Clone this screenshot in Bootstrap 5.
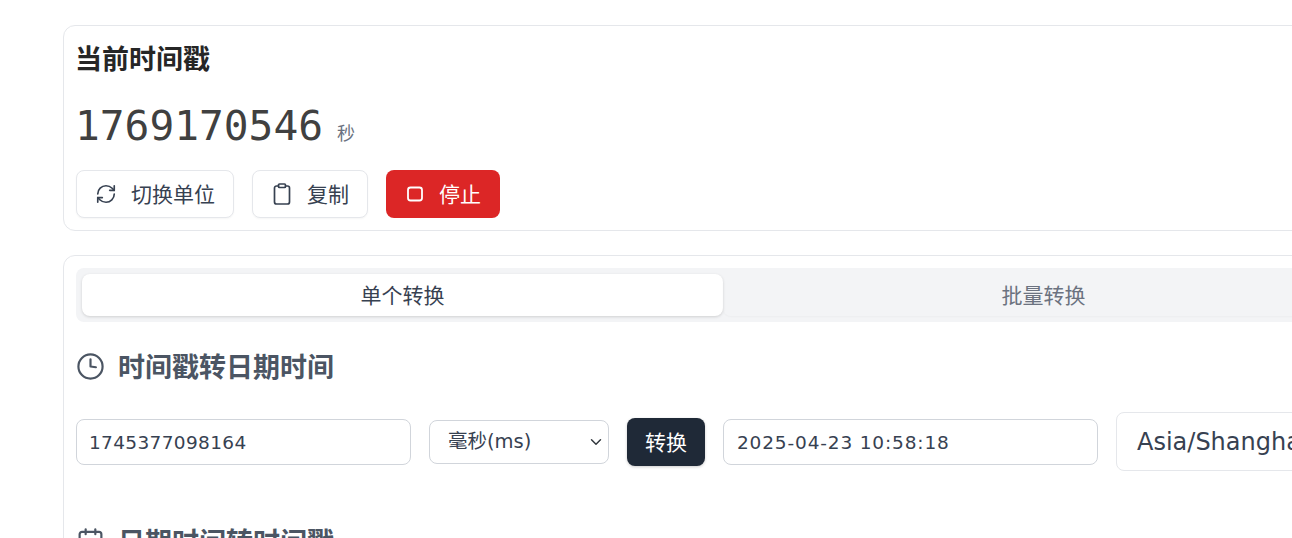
<!DOCTYPE html>
<html lang="zh-CN">
<head>
    <meta charset="UTF-8">
    <meta name="viewport" content="width=device-width, initial-scale=1.0">
    <title>时间戳转换</title>
    <link href="https://cdn.jsdelivr.net/npm/bootstrap@5.3.3/dist/css/bootstrap.min.css" rel="stylesheet">
    <style>
        html, body { overflow: hidden; height: 538px; }
        body { background: #fff; font-family: "DejaVu Sans", "Noto Sans CJK SC", sans-serif; color: #374151; }
        .page-wrap { width: 1320px; margin-left: 63px; padding-top: 25px; }
        .panel { border: 1px solid #e5e7eb; border-radius: 12px; padding: 12px; background: #fff; }
        .panel + .panel { margin-top: 24px; }
        .panel-top { height: 206px; }
        .panel-title { font-size: 27px; font-weight: 700; color: #262626; line-height: 42px; margin: -1px 0 0 -1px; font-family: "Noto Sans CJK SC", sans-serif; }
        .stamp-row { margin-top: 19px; height: 56px; }
        .stamp-num { font-family: "DejaVu Sans Mono", monospace; font-size: 41.2px; line-height: 56px; color: #404040; margin-left: -1px; }
        .stamp-unit { font-size: 18px; color: #6b7280; margin-left: 14px; font-family: "Noto Sans CJK SC", sans-serif; }
        .act-row { gap: 18px; margin-top: 16px; }
        .act-btn { height: 48px; font-size: 21px; border-radius: 8px; padding: 0 18px; gap: 14px; font-family: "Noto Sans CJK SC", sans-serif; }
        .act-light { background: #fff; border: 1px solid #e5e7eb; color: #374151; box-shadow: 0 1px 2px rgba(0,0,0,.04); }
        .act-red { background: #dc2626; border: 0; color: #fff; padding: 0 19px 0 18px; gap: 13px; }
        .act-btn svg { flex-shrink: 0; }
        .tab-strip { background: #f3f4f6; border-radius: 8px; padding: 6px; height: 54px; }
        .tab-strip .nav-link { height: 42px; padding: 0; font-size: 21px; border-radius: 8px; color: #6b7280; box-shadow: 0 1px 2px rgba(0,0,0,.03); font-family: "Noto Sans CJK SC", sans-serif; }
        .tab-strip .nav-link.active { background: #fff; color: #374151; box-shadow: 0 1px 3px rgba(0,0,0,.15); }
        .sec-head { font-size: 27px; font-weight: 700; color: #4b5563; gap: 13px; margin: 0; font-family: "Noto Sans CJK SC", sans-serif; }
        .sec-one { margin-top: 24px; height: 40px; }
        .sec-one svg { margin-top: 1px; }
        .sec-two { margin-top: 50px; height: 40px; }
        .conv-row { gap: 18px; margin-top: 26px; height: 59px; }
        .conv-input { height: 46px; border-color: #d1d5db; border-radius: 8px; padding: 1px 12px 0; color: #374151; font-size: 18.5px; }
        .field-a { width: 335px; letter-spacing: .35px; }
        .field-b { width: 180px; height: 44px; font-size: 19.5px; border-color: #d1d5db; border-radius: 8px; padding: 1px 30px 0 18px; color: #374151; background-position: right 4px center; }
        .field-c { width: 375px; padding-left: 13px; letter-spacing: .85px; }
        .conv-btn { width: 78px; height: 48px; background: #1f2937; color: #fff; border: 0; border-radius: 8px; font-size: 21px; padding: 0; box-shadow: 0 1px 3px rgba(0,0,0,.2); font-family: "Noto Sans CJK SC", sans-serif; }
        .tz-box { width: 230px; height: 59px; font-size: 24px; border: 1px solid #e5e7eb; border-radius: 8px; padding: 0 20px; color: #374151; flex-shrink: 0; }
    </style>
</head>
<body>

    <div class="page-wrap">

        <div class="panel panel-top">
            <h2 class="panel-title">当前时间戳</h2>
            <div class="stamp-row d-flex align-items-baseline">
                <span class="stamp-num">1769170546</span>
                <span class="stamp-unit">秒</span>
            </div>
            <div class="d-flex act-row">
                <button type="button" class="btn act-btn act-light d-inline-flex align-items-center">
                    <svg width="22" height="22" viewBox="0 0 24 24" fill="none" stroke="currentColor" stroke-width="1.8" stroke-linecap="round" stroke-linejoin="round"><path d="M3 12a9 9 0 0 1 9-9 9.75 9.75 0 0 1 6.74 2.74L21 8"/><path d="M21 3v5h-5"/><path d="M21 12a9 9 0 0 1-9 9 9.75 9.75 0 0 1-6.74-2.74L3 16"/><path d="M8 16H3v5"/></svg>
                    切换单位
                </button>
                <button type="button" class="btn act-btn act-light d-inline-flex align-items-center">
                    <svg width="22" height="24" viewBox="0 0 22 24" fill="none" stroke="currentColor" stroke-width="1.7" stroke-linecap="round" stroke-linejoin="round"><rect x="7.5" y="2" width="7" height="3.5" rx="1"/><path d="M14.5 4h2a2 2 0 0 1 2 2v14a2 2 0 0 1-2 2h-11a2 2 0 0 1-2-2V6a2 2 0 0 1 2-2h2"/></svg>
                    复制
                </button>
                <button type="button" class="btn act-btn act-red d-inline-flex align-items-center">
                    <svg width="22" height="22" viewBox="0 0 22 22" fill="none" stroke="currentColor" stroke-width="1.8" stroke-linecap="round" stroke-linejoin="round"><rect x="4" y="4.5" width="14" height="13" rx="2.5"/></svg>
                    停止
                </button>
            </div>
        </div>

        <div class="panel">
            <ul class="nav nav-fill tab-strip">
                <li class="nav-item"><a class="nav-link active d-flex align-items-center justify-content-center" href="#">单个转换</a></li>
                <li class="nav-item"><a class="nav-link d-flex align-items-center justify-content-center" href="#">批量转换</a></li>
            </ul>

            <h3 class="sec-head sec-one d-flex align-items-center">
                <svg width="29" height="29" viewBox="0 0 24 24" fill="none" stroke="currentColor" stroke-width="1.8" stroke-linecap="round" stroke-linejoin="round"><circle cx="12" cy="12" r="10"/><polyline points="12 6 12 12 16.5 12.6"/></svg>
                时间戳转日期时间
            </h3>

            <div class="conv-row d-flex align-items-center">
                <input type="text" class="form-control conv-input field-a flex-shrink-0" value="1745377098164">
                <select class="form-select field-b flex-shrink-0">
                    <option>毫秒(ms)</option>
                    <option>秒(s)</option>
                </select>
                <button type="button" class="btn conv-btn flex-shrink-0">转换</button>
                <input type="text" class="form-control conv-input field-c flex-shrink-0" value="2025-04-23 10:58:18">
                <div class="tz-box d-flex align-items-center">Asia/Shanghai</div>
            </div>

            <h3 class="sec-head sec-two d-flex align-items-center">
                <svg width="29" height="29" viewBox="0 0 24 24" fill="none" stroke="currentColor" stroke-width="1.8" stroke-linecap="round" stroke-linejoin="round"><path d="M8 2v4"/><path d="M16 2v4"/><rect x="3" y="4" width="18" height="18" rx="2"/><path d="M3 10h18"/></svg>
                日期时间转时间戳
            </h3>
        </div>

    </div>

    <script src="https://cdn.jsdelivr.net/npm/bootstrap@5.3.3/dist/js/bootstrap.bundle.min.js"></script>
</body>
</html>
